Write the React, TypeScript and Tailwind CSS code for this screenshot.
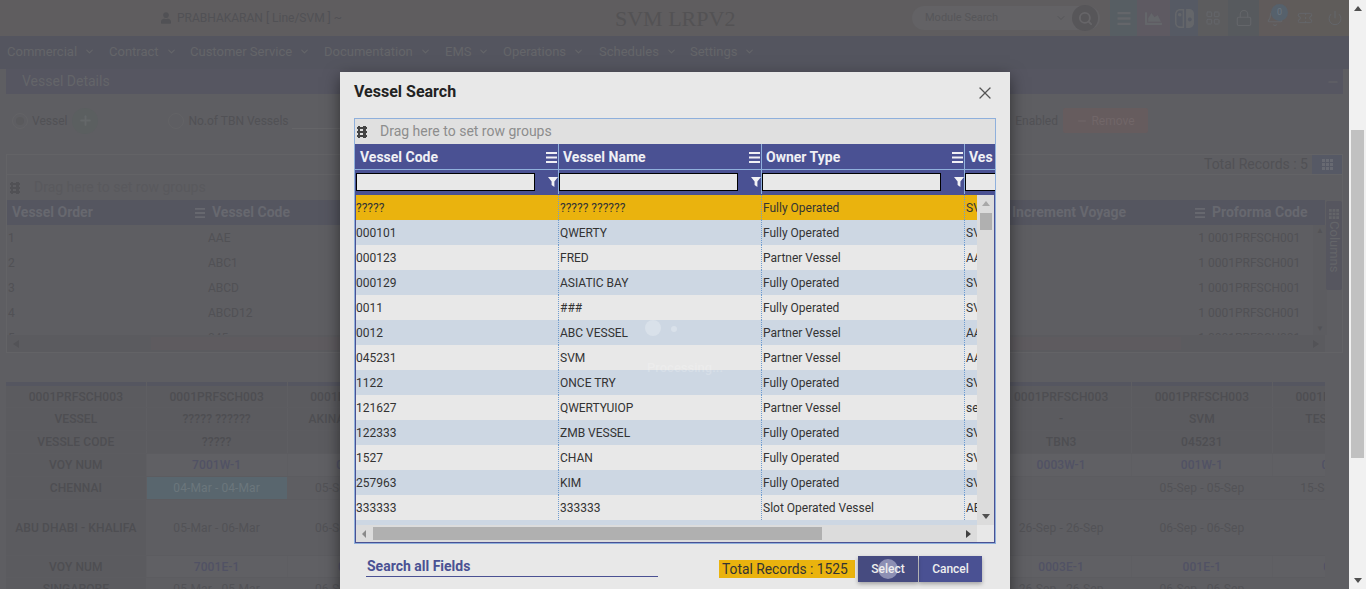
import React from "react";
import { ChevronDown, LayoutGrid, Lock, Bell, Search, Minus, X, Plus, Power, Ticket } from "lucide-react";
import { FaUser, FaChartArea } from "react-icons/fa";
import { BsNintendoSwitch } from "react-icons/bs";

const rows: string[][] = [
  ["?????", "????? ??????", "Fully Operated", "SV"],
  ["000101", "QWERTY", "Fully Operated", "SV"],
  ["000123", "FRED", "Partner Vessel", "AA"],
  ["000129", "ASIATIC BAY", "Fully Operated", "SV"],
  ["0011", "###", "Fully Operated", "SV"],
  ["0012", "ABC VESSEL", "Partner Vessel", "AA"],
  ["045231", "SVM", "Partner Vessel", "AA"],
  ["1122", "ONCE TRY", "Fully Operated", "SV"],
  ["121627", "QWERTYUIOP", "Partner Vessel", "se"],
  ["122333", "ZMB VESSEL", "Fully Operated", "SV"],
  ["1527", "CHAN", "Fully Operated", "SV"],
  ["257963", "KIM", "Fully Operated", "SV"],
  ["333333", "333333", "Slot Operated Vessel", "AE"],
];

const nav: [string, string][] = [
  ["Commercial", "w-[102px]"],
  ["Contract", "w-[81px]"],
  ["Customer Service", "w-[134px]"],
  ["Documentation", "w-[121px]"],
  ["EMS", "w-[58px]"],
  ["Operations", "w-[96px]"],
  ["Schedules", "w-[91px]"],
  ["Settings", "w-[80px]"],
];

const sched: { c: string[]; h: string; tone: string }[] = [
  { c: ["0001PRFSCH003", "0001PRFSCH003", "0001PRFSCH003", "0001PRFSCH003", "0001PRFSCH003", "0001PRFSCH003"], h: "h-[22px]", tone: "head" },
  { c: ["VESSEL", "????? ??????", "AKINADA VESSEL", "-", "SVM", "TEST VESSEL"], h: "h-[23px]", tone: "head" },
  { c: ["VESSLE CODE", "?????", "", "TBN3", "045231", ""], h: "h-[23px]", tone: "head" },
  { c: ["VOY NUM", "7001W-1", "001W-1", "0003W-1", "001W-1", "001W-1"], h: "h-[23px]", tone: "voy" },
  { c: ["CHENNAI", "04-Mar - 04-Mar", "05-Sep - 05-Sep", "", "05-Sep - 05-Sep", "15-Sep - 15-Sep"], h: "h-[23px]", tone: "port" },
  { c: ["ABU DHABI - KHALIFA", "05-Mar - 06-Mar", "06-Sep - 06-Sep", "26-Sep - 26-Sep", "06-Sep - 06-Sep", ""], h: "h-[56px]", tone: "port" },
  { c: ["VOY NUM", "7001E-1", "001E-1", "0003E-1", "001E-1", "001E-1"], h: "h-[22px]", tone: "voy" },
  { c: ["SINGAPORE", "05-Mar - 05-Mar", "06-Sep - 06-Sep", "26-Sep - 26-Sep", "06-Sep - 06-Sep", ""], h: "h-[22px]", tone: "port" },
];

function GroupIcon({ className }: { className: string }) {
  return (
    <svg viewBox="0 0 10 12" className={className}>
      <path d="M0 1h10v2H0zM0 5h10v2H0zM0 9h10v2H0z" fill="currentColor" />
      <path d="M1 0h2v12H1zM6 0h3v12H6z" fill="currentColor" />
    </svg>
  );
}

function Bars({ className }: { className: string }) {
  return (
    <svg viewBox="0 0 11 11" className={className}>
      <path d="M0 0h11v2H0zM0 4.5h11v2H0zM0 9h11v2H0z" fill="currentColor" />
    </svg>
  );
}

function Dots({ className }: { className: string }) {
  return (
    <svg viewBox="0 0 11 11" className={className}>
      <path d="M0 0h3v3H0zM4 0h3v3H4zM8 0h3v3H8zM0 4h3v3H0zM4 4h3v3H4zM8 4h3v3H8zM0 8h3v3H0zM4 8h3v3H4zM8 8h3v3H8z" fill="currentColor" />
    </svg>
  );
}

function Funnel() {
  return (
    <svg viewBox="0 0 10 10" className="h-[10px] w-[10px] shrink-0">
      <path d="M0 0h10L6.4 4.5V10L3.6 8V4.5z" fill="#f2f2f5" />
    </svg>
  );
}

function HeadCell({ label, w, pl }: { label: string; w: string; pl: string }) {
  return (
    <div className={`${w} ${pl} flex h-[25px] shrink-0 items-center border-r border-[#8fb0dc] pr-[1px] pt-px`}>
      <span className="flex-1 whitespace-nowrap text-[14px] font-bold text-[#f0f0f5]">{label}</span>
      <Bars className="h-[11px] w-[11px] text-[#f0f0f5]" />
    </div>
  );
}

function FilterCell({ w, pl }: { w: string; pl: string }) {
  return (
    <div className={`${w} ${pl} flex h-[24px] shrink-0 items-center justify-between border-r border-[#8fb0dc]`}>
      <div className="h-[18px] w-[179px] border border-black bg-[#e8e8e8]" />
      <Funnel />
    </div>
  );
}

function Background() {
  const dim = "text-[#646569]";
  const dark = "text-[#515155]";
  return (
    <div className="flex h-[589px] w-[1349px] flex-col overflow-hidden bg-[#5e5e62]">
      <header className="flex h-[36px] shrink-0 items-center bg-[#5f5d5f]">
        <div className={`ml-[161px] flex w-[339px] items-center gap-[6px] text-[12px] ${dark}`}>
          <FaUser size={10} className="h-[14px]" />
          <span>PRABHAKARAN [ Line/SVM ] ~</span>
        </div>
        <div className="ml-[115px] w-[297px] font-['Liberation_Serif',serif] text-[22px] text-[#535254]">SVM LRPV2</div>
        <div className="flex h-[24px] w-[188px] items-center rounded-full bg-[#636265] pl-[13px] pr-[2px] text-[11px] text-[#565659]">
          <span className="flex-1">Module Search</span>
          <ChevronDown size={12} />
          <span className="ml-[5px] flex h-[26px] w-[26px] items-center justify-center rounded-full bg-[#575659] text-[#666568]">
            <Search size={15} strokeWidth={3} />
          </span>
        </div>
        <div className="ml-[10px] flex h-[36px] items-center text-[#64666a]">
          <span className="flex h-full w-[27px] items-center justify-center bg-[#575e63]"><Bars className="h-[13px] w-[14px]" /></span>
          <span className="flex h-full w-[33px] items-center justify-center bg-[#5e5a62]"><FaChartArea size={17} /></span>
          <span className="flex h-full w-[28px] items-center justify-center bg-[#565a64]"><BsNintendoSwitch size={19} /></span>
          <span className="flex h-full w-[30px] items-center justify-center bg-[#5c5c5e]"><LayoutGrid size={16} strokeWidth={1.5} /></span>
          <span className="flex h-full w-[31px] items-center justify-center bg-[#575a5e]"><Lock size={18} strokeWidth={1.5} /></span>
          <span className="relative flex h-full w-[31px] items-center justify-center bg-[#605b5b]">
            <Bell size={18} strokeWidth={1.5} />
            <span className="absolute left-[12px] top-[4px] flex h-[17px] w-[17px] items-center justify-center rounded-full bg-[#56616c] text-[9px] text-[#6c7680]">0</span>
          </span>
          <span className="flex h-full w-[30px] items-center justify-center bg-[#605c5a]"><Ticket size={16} strokeWidth={1.5} /></span>
          <span className="flex h-full w-[29px] items-center justify-center bg-[#5f5c5a]"><Power size={16} strokeWidth={1.5} /></span>
        </div>
      </header>

      <nav className={`flex h-[33px] shrink-0 items-center bg-[#54555f] pb-[2px] pl-[7px] text-[13px] ${dim}`}>
        {nav.map(([t, w]) => (
          <span key={t} className={`${w} flex shrink-0 items-center gap-[7px]`}>
            {t}
            <ChevronDown size={11} strokeWidth={2.5} />
          </span>
        ))}
      </nav>

      <main className="flex flex-1 flex-col px-[6px]">
        <div className={`flex h-[25px] shrink-0 items-center justify-between bg-[#565661] pl-[16px] pr-[3px] text-[14px] ${dim}`}>
          <span>Vessel Details</span>
          <Minus size={14} />
        </div>

        <div className={`flex h-[60px] shrink-0 items-center pb-[7px] text-[12px] ${dark}`}>
          <span className="ml-[6px] flex h-[16px] w-[16px] items-center justify-center rounded-full border border-[#636366]">
            <span className="h-[8px] w-[8px] rounded-full bg-[#5a5a5d]" />
          </span>
          <span className="ml-[4px]">Vessel</span>
          <span className="ml-[5px] flex h-[26px] w-[26px] items-center justify-center rounded-full bg-[#5b5f60] text-[#646869]">
            <Plus size={15} strokeWidth={3} />
          </span>
          <span className="ml-[70px] h-[16px] w-[16px] rounded-full border border-[#636366]" />
          <span className="ml-[4px]">No.of TBN Vessels</span>
          <span className="ml-[3px] mt-[16px] h-px w-[50px] bg-[#656568]" />
          <span className="ml-auto mr-[5px]">Enabled</span>
          <span className="mr-[195px] flex h-[25px] w-[85px] items-center justify-center gap-[3px] rounded-[2px] bg-[#665c5e] text-[#716668]">
            <Minus size={12} />
            Remove
          </span>
        </div>

        <div className="flex h-[20px] shrink-0 items-center justify-end border-x border-t border-[#636366]">
          <span className={`mr-[4px] text-[14px] ${dark}`}>Total Records : 5</span>
          <span className="flex h-[20px] w-[30px] items-center justify-center bg-[#565965] text-[#686a72]">
            <Dots className="h-[11px] w-[11px]" />
          </span>
        </div>

        <div className="relative flex h-[179px] shrink-0 flex-col border border-[#636366]">
          <div className={`flex h-[25px] shrink-0 items-center text-[14px] ${dark}`}>
            <GroupIcon className="ml-[3px] mr-[14px] h-[12px] w-[10px]" />
            <span className="text-[#59595d]">Drag here to set row groups</span>
          </div>
          <div className="flex h-[25px] w-[1318px] shrink-0 bg-[#555660] text-[14px] font-bold text-[#67686f]">
            <div className="flex w-[200px] items-center justify-between pl-[5px] pr-[2px]"><span>Vessel Order</span><Bars className="h-[10px] w-[10px]" /></div>
            <div className="flex w-[200px] items-center pl-[5px]"><span>Vessel Code</span></div>
            <div className="ml-auto flex w-[200px] items-center justify-between pl-[5px] pr-[2px]"><span>Increment Voyage</span><Bars className="h-[10px] w-[10px]" /></div>
            <div className="flex w-[118px] items-center pl-[5px]"><span>Proforma Code</span></div>
          </div>
          {["AAE|1", "ABC1|2", "ABCD|3", "ABCD12|4", "045|5"].map((r, i) => {
            const [code, order] = r.split("|");
            return (
              <div key={r} className={`flex w-[1303px] shrink-0 overflow-hidden text-[12px] text-[#515155] ${i === 4 ? "h-[10px]" : "h-[25px]"}`}>
                <div className="flex h-[25px] w-[200px] items-center pl-[1px]">{order}</div>
                <div className="flex h-[25px] w-[200px] items-center pl-[1px]">{code}</div>
                <div className="ml-auto flex h-[25px] w-[200px] items-center justify-end pr-[2px]">1</div>
                <div className="flex h-[25px] w-[103px] items-center pl-[1px]">0001PRFSCH001</div>
              </div>
            );
          })}
          <div className="mt-auto flex h-[17px] w-[1318px] shrink-0 items-center justify-between bg-[#5b5b5f] px-[6px] text-[#535357]">
            <svg viewBox="0 0 6 8" className="h-[8px] w-[6px]"><path d="M6 0v8L0 4z" fill="currentColor" /></svg>
            <div className="h-[13px] w-[1030px] bg-[#5e5b5f]" />
            <svg viewBox="0 0 6 8" className="h-[8px] w-[6px]"><path d="M0 0v8l6-4z" fill="currentColor" /></svg>
          </div>
          <div className="absolute right-[15px] top-[50px] flex h-[110px] w-[14px] flex-col items-center justify-between bg-[#5c5c60] py-[2px]">
            <span className="text-[8px] leading-none text-[#535357]">▲</span>
            <span className="text-[8px] leading-none text-[#535357]">▼</span>
          </div>
          <div className="absolute right-0 top-[26px] flex h-[89px] w-[16px] flex-col items-center gap-[2px] rounded-[2px] bg-[#56565f] pt-[8px] text-[13px] text-[#646569]">
            <Dots className="h-[10px] w-[10px]" />
            <span className="[writing-mode:vertical-rl]">Columns</span>
          </div>
        </div>

        <div className="mt-[29px] flex w-[1319px] shrink-0 flex-col overflow-hidden">
          <div className="grid h-[4px] grid-cols-[repeat(10,140.75px)] gap-0">
            {Array.from({ length: 10 }).map((_, i) => (
              <div key={i} className="mr-px bg-[#555660]" />
            ))}
          </div>
          {sched.map((r, ri) => (
            <div key={ri} className={`grid ${r.h} shrink-0 grid-cols-[repeat(10,140.75px)] border-b border-[#5c5c60]`}>
              {[0, 1, 2, -1, -1, -1, -1, 3, 4, 5].map((k, ci) => {
                const t = k >= 0 ? r.c[k] : "";
                const cyan = ri === 4 && k === 1;
                const voy = r.tone === "voy" && k > 0;
                const head = r.tone === "head" || k === 0;
                const bg = cyan
                  ? "bg-[#59666e] text-[#6b767c]"
                  : voy
                    ? "bg-[#606064] font-medium text-[#515264]"
                    : head
                      ? "bg-[#5b5b5f] font-medium text-[#4e4e52]"
                      : "bg-[#5e5e62] text-[#525256]";
                return (
                  <div key={ci} className={`${bg} mr-px flex items-center justify-center overflow-hidden whitespace-nowrap text-[12px] tracking-[0.1px]`}>
                    {t}
                  </div>
                );
              })}
            </div>
          ))}
        </div>
      </main>
    </div>
  );
}

function Scrollbar() {
  return (
    <div className="flex h-[589px] w-[17px] flex-col items-center bg-[#f1f1f1]">
      <span className="mt-[6px] h-0 w-0 border-x-[4px] border-b-[5px] border-x-transparent border-b-[#505050]" />
      <div className="mt-[119px] h-[328px] w-[13px] bg-[#c1c1c1]" />
      <span className="mb-[6px] mt-auto h-0 w-0 border-x-[4px] border-t-[5px] border-x-transparent border-t-[#505050]" />
    </div>
  );
}

function Modal() {
  return (
    <div className="absolute left-[340px] top-[72px] flex h-[530px] w-[670px] flex-col bg-[#e8e8e8] px-[14px] font-['Roboto',sans-serif] shadow-[0_5px_15px_rgba(0,0,0,0.5)]">
      <div className="flex h-[46px] shrink-0 items-start justify-between pt-[11px]">
        <span className="text-[16px] font-bold leading-[17px] text-[#222]">Vessel Search</span>
        <X size={20} strokeWidth={1.5} className="mr-[1px] text-[#555]" />
      </div>

      <div className="relative flex h-[426px] w-[642px] shrink-0 flex-col border border-[#8fb0dc]">
        <div className="flex h-[25px] shrink-0 items-center bg-[#e0e0e0] text-[14px] text-[#8d8d8d]">
          <GroupIcon className="ml-[2px] mr-[13px] h-[12px] w-[10px] text-[#444]" />
          <span>Drag here to set row groups</span>
        </div>
        <div className="flex h-[51px] w-[640px] shrink-0 flex-col overflow-hidden bg-[#4a5193]">
          <div className="flex border-b border-[#8fb0dc]">
            <HeadCell label="Vessel Code" w="w-[204px]" pl="pl-[5px]" />
            <HeadCell label="Vessel Name" w="w-[203px]" pl="pl-[4px]" />
            <HeadCell label="Owner Type" w="w-[203px]" pl="pl-[4px]" />
            <div className="flex h-[25px] items-center pl-[4px] pt-px text-[14px] font-bold text-[#f0f0f5]">Ves</div>
          </div>
          <div className="flex">
            <FilterCell w="w-[204px]" pl="pl-[1px]" />
            <FilterCell w="w-[203px]" pl="pl-0" />
            <FilterCell w="w-[203px]" pl="pl-0" />
            <div className="mt-[3px] h-[18px] w-[30px] border border-r-0 border-black bg-[#e8e8e8]" />
          </div>
        </div>

        <div className="relative flex min-h-0 flex-1 flex-col border-x border-b border-[#4a5193]">
          <div className="flex h-[330px] shrink-0">
            <div className="flex h-[330px] w-[621px] shrink-0 flex-col overflow-hidden">
              {rows.map((r, i) => (
                <div
                  key={r[0]}
                  className={`flex h-[25px] shrink-0 items-center text-[12px] text-[#333] ${i === 0 ? "bg-[#eab30e]" : i % 2 ? "bg-[#cdd7e3]" : "bg-[#e8e8e8]"}`}
                >
                  {r.map((c, j) => (
                    <div
                      key={j}
                      className={`flex h-full items-center overflow-hidden whitespace-nowrap ${j === 0 ? "w-[203px] border-r border-dotted border-[#6f9ccf]" : j < 3 ? "w-[203px] border-r border-dotted border-[#6f9ccf] pl-[1px]" : "flex-1 pl-[1px]"}`}
                    >
                      {c}
                    </div>
                  ))}
                </div>
              ))}
              <div className="h-[5px] shrink-0 bg-[#cdd7e3]" />
            </div>
            <div className="flex h-[330px] w-[17px] shrink-0 flex-col items-center bg-[#dcdcdc]">
              <span className="mt-[6px] h-0 w-0 border-x-[4px] border-b-[5px] border-x-transparent border-b-[#a8a8a8]" />
              <div className="mt-[7px] h-[17px] w-[12px] bg-[#b0b0b0]" />
              <span className="mb-[6px] mt-auto h-0 w-0 border-x-[4px] border-t-[5px] border-x-transparent border-t-[#505050]" />
            </div>
          </div>
          <div className="flex h-[17px] w-[621px] shrink-0 items-center bg-[#dcdcdc] pl-[6px] pr-[6px]">
            <span className="h-0 w-0 border-y-[4px] border-r-[4px] border-y-transparent border-r-[#8a8a8a]" />
            <div className="ml-[7px] h-[13px] w-[449px] bg-[#b0b0b0]" />
            <span className="ml-auto h-0 w-0 border-y-[4px] border-l-[5px] border-y-transparent border-l-[#404040]" />
          </div>
        </div>
      </div>

      <div className="flex shrink-0 items-start pt-[12px]">
        <div className="ml-[12px] h-[21px] w-[292px] border-b border-[#4a5193] pl-px text-[14px] font-bold leading-[20px] text-[#4a5193]">Search all Fields</div>
        <div className="ml-[61px] mt-[4px] flex h-[18px] w-[136px] items-center bg-[#eab30e] pl-[3px] text-[13.8px] text-[#333]">Total Records : 1525</div>
        <button className="relative ml-[3px] h-[26px] w-[60px] overflow-hidden bg-[#464b80] text-[12px] font-medium text-[#eee] shadow-[0_2px_4px_rgba(0,0,0,0.3)]">
          <span className="absolute left-[20px] top-[3px] h-[20px] w-[20px] rounded-full bg-[#8d90b4]" />
          <span className="relative">Select</span>
        </button>
        <button className="ml-px h-[26px] w-[63px] bg-[#4a5193] text-[12px] font-medium text-[#eee] shadow-[0_2px_4px_rgba(0,0,0,0.3)]">Cancel</button>
      </div>

      <span className="absolute left-[305px] top-[248px] h-[16px] w-[16px] rounded-full bg-white/25" />
      <span className="absolute left-[331px] top-[254px] h-[6px] w-[6px] rounded-full bg-white/25" />
      <span className="absolute left-[307px] top-[286px] text-[13px] font-medium text-white/20">Processing...</span>
    </div>
  );
}

export default function App() {
  return (
    <div className="relative flex h-[589px] w-[1366px] overflow-hidden font-['Roboto',sans-serif]">
      <Background />
      <Scrollbar />
      <Modal />
    </div>
  );
}
